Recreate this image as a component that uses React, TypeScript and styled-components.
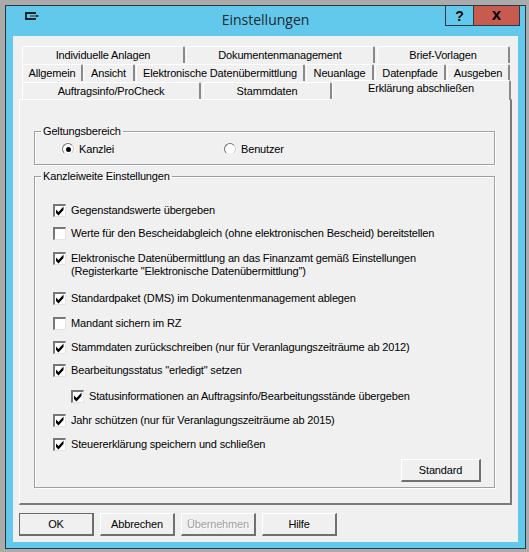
import React from 'react'
import styled, { createGlobalStyle } from 'styled-components'

const Global = createGlobalStyle`
  html, body { margin: 0; padding: 0; background: #ababab; }
  * { box-sizing: border-box; }
`

const Screen = styled.div`
  width: 529px;
  height: 552px;
  padding: 5px 3px 3px 5px;
  background: #ababab;
  font-family: "Liberation Sans", Arial, sans-serif;
  font-size: 11px;
  letter-spacing: -0.16px;
  color: #000;
`

const Win = styled.div`
  height: 544px;
  display: flex;
  flex-direction: column;
  background: #63c9ec;
  border: 1px solid #2b3a42;
`

const TitleBar = styled.div`
  height: 30px;
  flex-shrink: 0;
  display: flex;
  position: relative;
  align-items: flex-start;
  justify-content: center;
`

const TitleIcon = styled.svg`
  position: absolute;
  left: 19px;
  top: 6px;
`

const Title = styled.div`
  font-family: "Open Sans", sans-serif;
  font-size: 14px;
  letter-spacing: 0;
  line-height: 20px;
  margin-top: 4px;
  color: #1c2a30;
`

const Caption = styled.div`
  position: absolute;
  top: -1px;
  right: 5px;
  display: flex;
`

const CapBtn = styled.div<{ $w: number; $close?: boolean }>`
  width: ${p => p.$w}px;
  height: 21px;
  display: flex;
  align-items: center;
  justify-content: center;
  font-family: "Liberation Sans", sans-serif;
  font-weight: 700;
  font-size: ${p => (p.$close ? 17 : 14)}px;
  line-height: 1;
  padding-bottom: ${p => (p.$close ? 3 : 0)}px;
  color: #000;
  border: 1px solid #2b3a42;
  border-left-width: ${p => (p.$close ? 0 : 1)}px;
  background: ${p => (p.$close ? '#c75b50' : 'transparent')};
`

const Client = styled.div`
  flex: 1;
  margin: 0 7px 6px 7px;
  background: #f0f0f0;
  padding: 10px 6px 0 6px;
  display: flex;
  flex-direction: column;
`

const TabStrip = styled.div`
  display: flex;
  flex-direction: column;
  gap: 1px;
  padding-left: 3px;
`

const TabRow = styled.div`
  display: flex;
  height: 17px;
`

const Tab = styled.div<{ $x: number; $w: number; $active?: boolean }>`
  position: ${p => (p.$active ? 'relative' : 'static')};
  width: ${p => p.$w}px;
  margin-left: ${p => p.$x}px;
  height: ${p => (p.$active ? 20 : 17)}px;
  margin-top: ${p => (p.$active ? -2 : 0)}px;
  display: flex;
  align-items: ${p => (p.$active ? 'flex-start' : 'center')};
  justify-content: center;
  padding-top: ${p => (p.$active ? 1 : 0)}px;
  white-space: nowrap;
  background: #f0f0f0;
  border-top: 1px solid #fff;
  border-left: 1px solid #fff;
  border-right: 2px solid #8a8a8a;
  border-top-left-radius: 2px;
  border-top-right-radius: 2px;
  z-index: ${p => (p.$active ? 2 : 0)};
`

const Page = styled.div`
  width: 493px;
  height: 406px;
  padding: 25px 15px 0 14px;
  background: #f0f0f0;
  border-top: 1px solid #fff;
  border-left: 1px solid #fff;
  border-right: 2px solid #7a7a7a;
  border-bottom: 2px solid #7a7a7a;
  display: flex;
  flex-direction: column;
  gap: 5px;
`

const Group = styled.fieldset<{ $h: number }>`
  margin: 0;
  padding: 0;
  height: ${p => p.$h}px;
  min-width: 0;
  border: 1px solid #a0a0a0;
  box-shadow: 1px 1px 0 #fff, inset 1px 1px 0 #fff;
  display: flex;
  flex-direction: column;
`

const Legend = styled.legend`
  margin-left: 6px;
  padding: 0 2px;
  line-height: 13px;
`

const RadioRow = styled.div`
  display: grid;
  grid-template-columns: 162px 1fr;
  padding: 4px 0 0 27px;
`

const RadioItem = styled.div`
  display: flex;
  align-items: center;
  gap: 5px;
  height: 14px;
`

const RadioDot = styled.span<{ $on?: boolean }>`
  width: 12px;
  height: 12px;
  border-radius: 50%;
  background: #fff;
  border: 1px solid;
  border-color: #6f6f6f #c8c8c8 #e3e3e3 #6f6f6f;
  box-shadow: 0 0 0 1px #f8f8f8;
  display: flex;
  align-items: center;
  justify-content: center;
  &::after {
    content: '';
    width: 5px;
    height: 5px;
    border-radius: 50%;
    background: ${p => (p.$on ? '#000' : 'transparent')};
  }
`

const OptionList = styled.div`
  display: flex;
  flex-direction: column;
  padding: 21px 0 0 18px;
`

const Option = styled.div<{ $gap: number; $sub?: boolean }>`
  display: flex;
  align-items: flex-start;
  gap: 5px;
  margin-top: ${p => p.$gap}px;
  margin-left: ${p => (p.$sub ? 18 : 0)}px;
  line-height: 13px;
`

const Check = styled.span`
  width: 13px;
  height: 13px;
  flex-shrink: 0;
  background: #fff;
  border-style: solid;
  border-width: 2px 1px 1px 2px;
  border-color: #777 #e4e4e4 #e4e4e4 #777;
  display: flex;
`

const Footer = styled.div`
  display: flex;
  justify-content: flex-end;
  padding: 8px 13px 0 0;
`

const Btn = styled.div<{ $w: number; $disabled?: boolean; $default?: boolean }>`
  width: ${p => p.$w}px;
  height: 23px;
  display: flex;
  align-items: center;
  justify-content: center;
  background: #f0f0f0;
  color: ${p => (p.$disabled ? '#a0a0a0' : '#000')};
  text-shadow: ${p => (p.$disabled ? '1px 1px 0 #fff' : 'none')};
  border-top: 1px solid #fff;
  border-left: 1px solid #fff;
  border-right: 2px solid #707070;
  border-bottom: 2px solid #707070;
  outline: ${p => (p.$default ? '1px solid #6a6a6a' : 'none')};
  outline-offset: -1px;
`

const ButtonBar = styled.div`
  display: flex;
  gap: 6px;
  padding-top: 8px;
`

const tabRows = [
  [
    { x: 0, w: 163, t: 'Individuelle Anlagen' },
    { x: 1, w: 189, t: 'Dokumentenmanagement' },
    { x: 2, w: 133, t: 'Brief-Vorlagen' },
  ],
  [
    { x: 0, w: 61, t: 'Allgemein' },
    { x: 0, w: 52, t: 'Ansicht' },
    { x: 1, w: 169, t: 'Elektronische Datenübermittlung' },
    { x: 1, w: 68, t: 'Neuanlage' },
    { x: 1, w: 71, t: 'Datenpfade' },
    { x: 1, w: 63, t: 'Ausgeben' },
  ],
]

const options = [
  { gap: 0, on: true, t: 'Gegenstandswerte übergeben' },
  { gap: 10, on: false, t: 'Werte für den Bescheidabgleich (ohne elektronischen Bescheid) bereitstellen' },
  { gap: 12, on: true, t: <>Elektronische Datenübermittlung an das Finanzamt gemäß Einstellungen<br />(Registerkarte "Elektronische Datenübermittlung")</> },
  { gap: 14, on: true, t: 'Standardpaket (DMS) im Dokumentenmanagement ablegen' },
  { gap: 12, on: false, t: 'Mandant sichern im RZ' },
  { gap: 11, on: true, t: 'Stammdaten zurückschreiben (nur für Veranlagungszeiträume ab 2012)' },
  { gap: 10, on: true, t: 'Bearbeitungsstatus "erledigt" setzen' },
  { gap: 13, on: true, sub: true, t: 'Statusinformationen an Auftragsinfo/Bearbeitungsstände übergeben' },
  { gap: 11, on: true, t: 'Jahr schützen (nur für Veranlagungszeiträume ab 2015)' },
  { gap: 11, on: true, t: 'Steuererklärung speichern und schließen' },
]

const Tick = () => (
  <svg width="10" height="10" viewBox="0 0 10 10">
    <path d="M1 3.5 L3.5 6 L8.5 0.5 V4 L3.5 9.5 L1 7 Z" fill="#000" />
  </svg>
)

export default function App() {
  return (
    <Screen>
      <Global />
      <Win>
        <TitleBar>
          <TitleIcon width="15" height="8" viewBox="0 0 15 8">
            <path d="M0 0H11V2H2V6H11V8H0Z" fill="#1d2326" />
            <path d="M5 3.5H11.5V2.5L14 4L11.5 5.5V4.5H5Z" fill="#1d2326" />
          </TitleIcon>
          <Title>Einstellungen</Title>
          <Caption>
            <CapBtn $w={29}>?</CapBtn>
            <CapBtn $w={46} $close>x</CapBtn>
          </Caption>
        </TitleBar>
        <Client>
          <TabStrip>
            {tabRows.map((row, i) => (
              <TabRow key={i}>
                {row.map(tab => (
                  <Tab key={tab.t} $x={tab.x} $w={tab.w}>{tab.t}</Tab>
                ))}
              </TabRow>
            ))}
            <TabRow>
              <Tab $x={0} $w={179}>Auftragsinfo/ProCheck</Tab>
              <Tab $x={2} $w={129}>Stammdaten</Tab>
              <Tab $x={0} $w={179} $active>Erklärung abschließen</Tab>
            </TabRow>
          </TabStrip>
          <Page>
            <Group $h={40}>
              <Legend>Geltungsbereich</Legend>
              <RadioRow>
                <RadioItem><RadioDot $on />Kanzlei</RadioItem>
                <RadioItem><RadioDot />Benutzer</RadioItem>
              </RadioRow>
            </Group>
            <Group $h={318}>
              <Legend>Kanzleiweite Einstellungen</Legend>
              <OptionList>
                {options.map((o, i) => (
                  <Option key={i} $gap={o.gap} $sub={o.sub}>
                    <Check>{o.on && <Tick />}</Check>
                    <span>{o.t}</span>
                  </Option>
                ))}
              </OptionList>
              <Footer>
                <Btn $w={80}>Standard</Btn>
              </Footer>
            </Group>
          </Page>
          <ButtonBar>
            <Btn $w={75} $default>OK</Btn>
            <Btn $w={75}>Abbrechen</Btn>
            <Btn $w={75} $disabled>Übernehmen</Btn>
            <Btn $w={75}>Hilfe</Btn>
          </ButtonBar>
        </Client>
      </Win>
    </Screen>
  )
}
